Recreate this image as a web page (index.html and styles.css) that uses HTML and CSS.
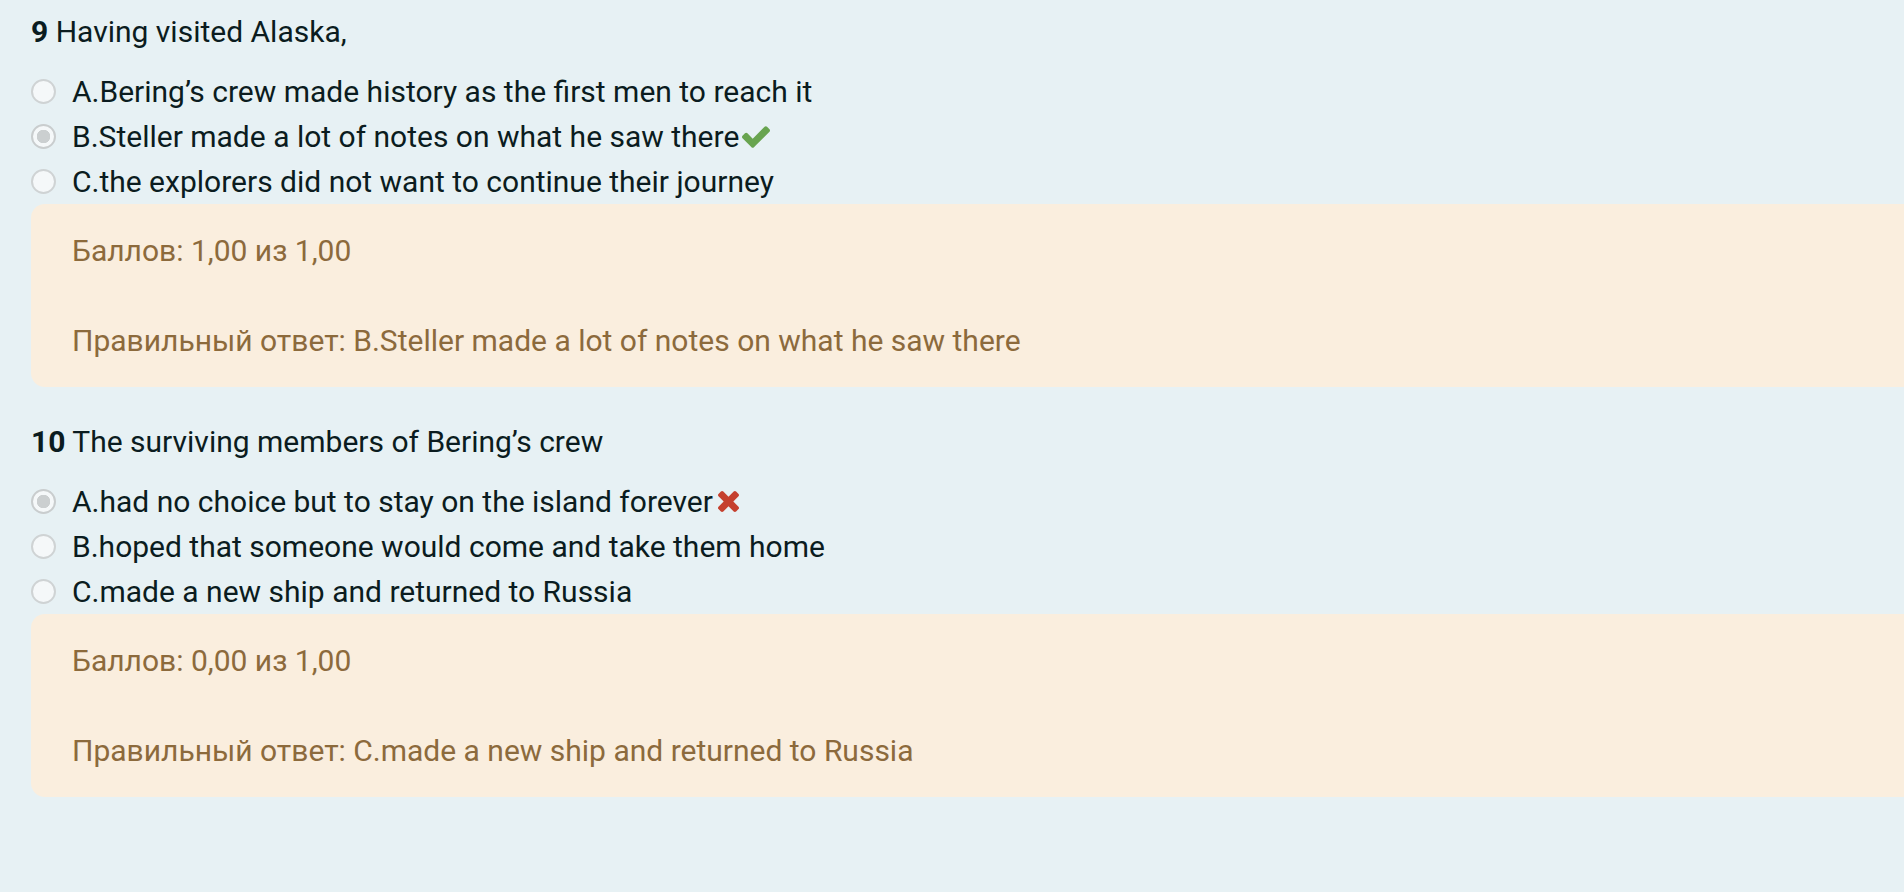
FILE: index.html
```html
<!DOCTYPE html>
<html lang="ru">
<head>
<meta charset="utf-8">
<title>Quiz review</title>
<link rel="stylesheet" href="styles.css">
</head>
<body>
<div class="page">
  <div class="que">
    <div class="qtext"><b class="qno">9</b> Having visited Alaska,</div>
    <div class="answers">
      <label class="opt"><input type="radio" class="radio" disabled><span class="otext">A.Bering’s crew made history as the first men to reach it</span></label>
      <label class="opt"><input type="radio" class="radio" checked disabled><span class="otext">B.Steller made a lot of notes on what he saw there</span><svg class="icon icon-ok" viewBox="121 334 1550 1188" aria-label="Верно"><path d="M1671 566q0 40-28 68l-724 724-136 136q-28 28-68 28t-68-28l-136-136-362-362q-28-28-28-68t28-68l136-136q28-28 68-28t68 28l294 295 656-657q28-28 68-28t68 28l136 136q28 28 28 68z"/></svg></label>
      <label class="opt"><input type="radio" class="radio" disabled><span class="otext">C.the explorers did not want to continue their journey</span></label>
    </div>
    <div class="outcome">
      <div class="grade">Баллов: 1,00 из 1,00</div>
      <div class="spacer"></div>
      <div class="rightanswer">Правильный ответ: B.Steller made a lot of notes on what he saw there</div>
    </div>
  </div>

  <div class="que">
    <div class="qtext"><b class="qno">10</b> The surviving members of Bering’s crew</div>
    <div class="answers">
      <label class="opt"><input type="radio" class="radio" checked disabled><span class="otext">A.had no choice but to stay on the island forever</span><svg class="icon icon-bad" viewBox="110 366 1188 1188" aria-label="Неверно"><path d="M1298 1322q0 40-28 68l-136 136q-28 28-68 28t-68-28l-294-294-294 294q-28 28-68 28t-68-28l-136-136q-28-28-28-68t28-68l294-294-294-294q-28-28-28-68t28-68l136-136q28-28 68-28t68 28l294 294 294-294q28-28 68-28t68 28l136 136q28 28 28 68t-28 68l-294 294 294 294q28 28 28 68z"/></svg></label>
      <label class="opt"><input type="radio" class="radio" disabled><span class="otext">B.hoped that someone would come and take them home</span></label>
      <label class="opt"><input type="radio" class="radio" disabled><span class="otext">C.made a new ship and returned to Russia</span></label>
    </div>
    <div class="outcome">
      <div class="grade">Баллов: 0,00 из 1,00</div>
      <div class="spacer"></div>
      <div class="rightanswer">Правильный ответ: C.made a new ship and returned to Russia</div>
    </div>
  </div>
</div>
</body>
</html>
```

FILE: styles.css
```css
html, body {
  margin: 0;
  padding: 0;
  background: #e7f1f4;
  overflow: hidden;
}

body {
  font-family: Roboto, "Noto Sans", "Liberation Sans", sans-serif;
  font-size: 30px;
  line-height: 45px;
  color: #0b1c20;
}

.page {
  padding: 9px 0 0 31px;
}

.que {
  margin-bottom: 32px;
}

.qtext {
  margin: 0;
}

.qno {
  font-weight: 700;
}

.answers {
  margin-top: 15px;
  display: flex;
  flex-direction: column;
}

.opt {
  display: flex;
  align-items: center;
  height: 45px;
}

.radio {
  appearance: none;
  -webkit-appearance: none;
  box-sizing: border-box;
  width: 25px;
  height: 25px;
  margin: 0 16px 0 0;
  border-radius: 50%;
  border: 2px solid #cfd3d4;
  background: #f5f8f9;
  flex: none;
}

.radio:checked {
  border-color: #c9cdce;
  background: radial-gradient(circle, #cbcfd0 0 6.5px, #f5f8f9 7px);
}

.otext {
  white-space: nowrap;
}

.icon {
  flex: none;
}

.icon-ok {
  width: 28px;
  height: 22px;
  margin-left: 3px;
  fill: #68a44f;
}

.icon-bad {
  width: 21px;
  height: 21px;
  margin-left: 5px;
  fill: #c5402e;
}

.outcome {
  background: #faeede;
  color: #8c6a3c;
  border-radius: 14px 0 0 14px;
  padding: 24px 40px 24px 41px;
}

.spacer {
  height: 45px;
}
```
